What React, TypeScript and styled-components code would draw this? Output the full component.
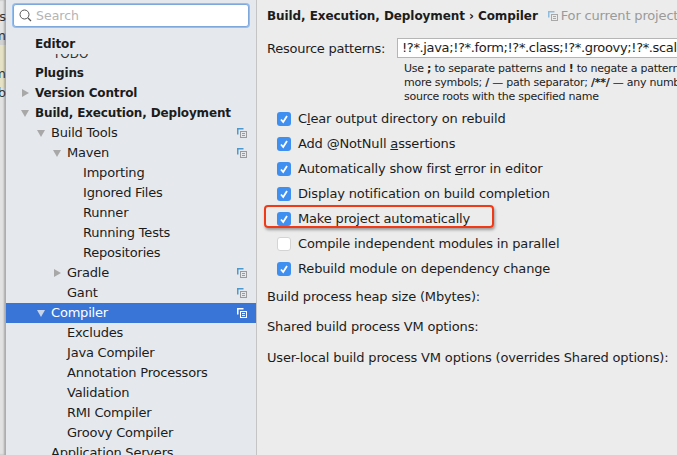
import React from "react"
import styled, { createGlobalStyle } from "styled-components"

const Global = createGlobalStyle`
  html, body {
    margin: 0;
    padding: 0;
    background: #ececec;
  }
  body {
    font-family: "DejaVu Sans", "Liberation Sans", sans-serif;
    font-size: 13px;
    color: #1c1c1c;
  }
`

type TreeItem = {
  label: string
  level: number
  bold?: boolean
  arrow?: "open" | "closed"
  copy?: boolean
  selected?: boolean
}

const tree: TreeItem[] = [
  { label: "Version Control", level: 0, bold: true, arrow: "closed" },
  { label: "Build, Execution, Deployment", level: 0, bold: true, arrow: "open" },
  { label: "Build Tools", level: 1, arrow: "open", copy: true },
  { label: "Maven", level: 2, arrow: "open", copy: true },
  { label: "Importing", level: 3 },
  { label: "Ignored Files", level: 3 },
  { label: "Runner", level: 3 },
  { label: "Running Tests", level: 3 },
  { label: "Repositories", level: 3 },
  { label: "Gradle", level: 2, arrow: "closed", copy: true },
  { label: "Gant", level: 2, copy: true },
  { label: "Compiler", level: 1, arrow: "open", copy: true, selected: true },
  { label: "Excludes", level: 2 },
  { label: "Java Compiler", level: 2 },
  { label: "Annotation Processors", level: 2 },
  { label: "Validation", level: 2 },
  { label: "RMI Compiler", level: 2 },
  { label: "Groovy Compiler", level: 2 },
  { label: "Application Servers", level: 1 },
]

const options = [
  { before: "C", key: "l", after: "ear output directory on rebuild", checked: true },
  { before: "Add @NotNull ", key: "a", after: "ssertions", checked: true },
  { before: "Automatically show first ", key: "e", after: "rror in editor", checked: true },
  { before: "Display notification on build completion", checked: true },
  { before: "Make project automatically", checked: true, marked: true },
  { before: "Compile independent modules in parallel", checked: false },
  { before: "Rebuild module on dependency change", checked: true },
]

const Window = styled.div`
  display: flex;
  width: 677px;
  height: 455px;
  overflow: hidden;
`

const BackWindow = styled.div`
  flex: 0 0 6px;
  box-sizing: border-box;
  padding-top: 7px;
  overflow: hidden;
  background: linear-gradient(#e4e4e4 0 33px, #d2d2d2 33px 45px, #e6e2c6 45px 88px, #e2e2e2 88px);
  box-shadow: inset -2px 0 2px rgba(0, 0, 0, 0.25);
`

const BackLine = styled.div`
  display: flex;
  justify-content: flex-end;
  height: 19px;
  line-height: 19px;
  white-space: nowrap;
  color: #333;
`

const Sidebar = styled.div`
  flex: 0 0 251px;
  background: #e5e9ee;
  border-right: 1px solid #c4c4c4;
  box-sizing: border-box;
  overflow: hidden;
`

const SearchBox = styled.div`
  display: flex;
  align-items: center;
  gap: 4px;
  height: 21px;
  margin: 4px 7px 0 7px;
  padding: 0 5px;
  background: #fff;
  border: 1px solid #7ea8dc;
  border-radius: 3px;
  box-shadow: 0 0 0 1px #94bfee;
  color: #b4b4b4;
  font-size: 12.5px;
`

const PinnedRow = styled.div<{ $top: number }>`
  height: 20px;
  line-height: 20px;
  margin-top: ${(p) => p.$top}px;
  padding-left: 29px;
  font-weight: bold;
  font-size: 12px;
  letter-spacing: -0.15px;
`

const GhostRow = styled.div`
  height: 4px;
  overflow: hidden;
  padding-left: 47px;
  font-size: 12px;
  line-height: 0;
  color: #333;
`

const Row = styled.div<{ $level: number; $selected?: boolean; $bold?: boolean }>`
  position: relative;
  height: 20px;
  line-height: 20px;
  padding-left: ${(p) => 29 + p.$level * 16}px;
  background: ${(p) => (p.$selected ? "#3875d7" : "transparent")};
  color: ${(p) => (p.$selected ? "#fff" : "#1c1c1c")};
  font-weight: ${(p) => (p.$bold ? "bold" : "normal")};
  font-size: ${(p) => (p.$bold ? "12px" : "13px")};
  letter-spacing: ${(p) => (p.$bold ? "-0.15px" : "-0.2px")};
  white-space: nowrap;
`

const Arrow = styled.svg<{ $level: number }>`
  position: absolute;
  left: ${(p) => 14 + p.$level * 16}px;
  top: 5px;
`

const CopyMark = styled.svg`
  position: absolute;
  right: 9px;
  top: 5px;
`

const Content = styled.div`
  flex: 1;
  min-width: 0;
  padding: 7px 0 0 10px;
  overflow: hidden;
  white-space: nowrap;
  letter-spacing: -0.16px;
`

const Heading = styled.div`
  display: flex;
  align-items: center;
  height: 17px;
  font-weight: bold;
  font-size: 12px;
  letter-spacing: -0.08px;
`

const Scope = styled.span`
  display: inline-flex;
  align-items: center;
  gap: 3px;
  margin-left: 10px;
  font-weight: normal;
  font-size: 13px;
  letter-spacing: -0.16px;
  color: #9a9a9a;
`

const PatternRow = styled.div`
  display: flex;
  align-items: center;
  margin-top: 14px;
  height: 20px;
`

const PatternLabel = styled.div`
  flex: 0 0 130px;
  letter-spacing: -0.25px;
`

const PatternInput = styled.div`
  flex: 0 0 auto;
  width: 290px;
  height: 18px;
  line-height: 18px;
  padding-left: 4px;
  background: #fff;
  border: 1px solid #b5b5b5;
  overflow: hidden;
  letter-spacing: -0.35px;
`

const Hint = styled.div`
  margin: 4px 0 0 137px;
  font-size: 11px;
  line-height: 14px;
  letter-spacing: -0.25px;
  color: #222;
`

const OptionList = styled.div`
  display: flex;
  flex-direction: column;
  margin: 2px 0 0 10px;
`

const Option = styled.div`
  position: relative;
  display: flex;
  align-items: center;
  gap: 7px;
  height: 25px;
`

const Box = styled.span<{ $checked: boolean }>`
  display: flex;
  align-items: center;
  justify-content: center;
  width: 14px;
  height: 14px;
  border-radius: 3px;
  box-sizing: border-box;
  background: ${(p) => (p.$checked ? "#3f8ff0" : "#fff")};
  border: ${(p) => (p.$checked ? "none" : "1px solid #d4d4d4")};
`

const Marker = styled.span`
  position: absolute;
  left: -13px;
  top: -1px;
  width: 226px;
  height: 19px;
  border: 2px solid #f03a17;
  border-radius: 4px;
  box-shadow: 1px 2px 3px rgba(0, 0, 0, 0.35);
`

const Underlined = styled.span`
  text-decoration: underline;
`

const FieldList = styled.div`
  display: flex;
  flex-direction: column;
  margin-top: 1px;
`

const FieldLabel = styled.div<{ $height?: number }>`
  height: ${(p) => p.$height ?? 30}px;
  line-height: ${(p) => p.$height ?? 30}px;
`

const CopyIcon: React.FC<{ back: string; front: string }> = ({ back, front }) => (
  <>
    <path d="M0.75 6.5V0.75H6.5" fill="none" stroke={back} strokeWidth="1.5" />
    <rect x="3.5" y="3.5" width="6" height="6" fill="none" stroke={front} />
    <path d="M5 5.5H8M5 7.5H8" stroke={front} />
  </>
)

const App: React.FC = () => (
  <Window>
    <Global />
    <BackWindow>
      <BackLine>es</BackLine>
      <BackLine>m</BackLine>
      <BackLine />
      <BackLine>m</BackLine>
      <BackLine>b</BackLine>
    </BackWindow>
    <Sidebar>
      <SearchBox>
        <svg width="13" height="13" viewBox="0 0 13 13">
          <circle cx="5.5" cy="5.5" r="4.5" fill="none" stroke="#555" />
          <path d="M9 9L12 12" stroke="#555" strokeWidth="1.3" />
        </svg>
        Search
      </SearchBox>
      <PinnedRow $top={7}>Editor</PinnedRow>
      <GhostRow>TODO</GhostRow>
      <PinnedRow $top={5}>Plugins</PinnedRow>
      {tree.map((item) => (
        <Row key={item.label} $level={item.level} $selected={item.selected} $bold={item.bold}>
          {item.arrow && (
            <Arrow $level={item.level} width="10" height="10" viewBox="0 0 10 10">
              <path
                d={item.arrow === "open" ? "M1 2H9L5 9Z" : "M2 1V9L9 5Z"}
                fill={item.selected ? "#c8d4e8" : "#a8a8a8"}
              />
            </Arrow>
          )}
          {item.label}
          {item.copy && (
            <CopyMark width="10" height="10" viewBox="0 0 10 10">
              <CopyIcon
                back={item.selected ? "#fff" : "#4a9ad0"}
                front={item.selected ? "#fff" : "#9a9a9a"}
              />
            </CopyMark>
          )}
        </Row>
      ))}
    </Sidebar>
    <Content>
      <Heading>
        Build, Execution, Deployment › Compiler
        <Scope>
          <svg width="10" height="10" viewBox="0 0 10 10">
            <CopyIcon back="#8fbcdc" front="#a8a8a8" />
          </svg>
          For current project
        </Scope>
      </Heading>
      <PatternRow>
        <PatternLabel>Resource patterns:</PatternLabel>
        <PatternInput>!?*.java;!?*.form;!?*.class;!?*.groovy;!?*.scala;!?*.flex;</PatternInput>
      </PatternRow>
      <Hint>
        Use <b>;</b> to separate patterns and <b>!</b> to negate a pattern. Accepted wildcards: ? — exactly one symbol; * — zero or
        <br />
        more symbols; <b>/</b> — path separator; <b>/**/</b> — any number of directories; &lt;dir_name&gt;:&lt;pattern&gt; — restrict to
        <br />
        source roots with the specified name
      </Hint>
      <OptionList>
        {options.map((o) => (
          <Option key={o.before}>
            <Box $checked={o.checked}>
              {o.checked && (
                <svg width="10" height="10" viewBox="0 0 10 10">
                  <path d="M2 5.5L4.2 8L8 2" fill="none" stroke="#fff" strokeWidth="1.8" />
                </svg>
              )}
            </Box>
            <span>
              {o.before}
              {o.key && <Underlined>{o.key}</Underlined>}
              {o.after}
            </span>
            {o.marked && <Marker />}
          </Option>
        ))}
      </OptionList>
      <FieldList>
        <FieldLabel>Build process heap size (Mbytes):</FieldLabel>
        <FieldLabel>Shared build process VM options:</FieldLabel>
        <FieldLabel $height={32}>User-local build process VM options (overrides Shared options):</FieldLabel>
      </FieldList>
    </Content>
  </Window>
)

export default App
